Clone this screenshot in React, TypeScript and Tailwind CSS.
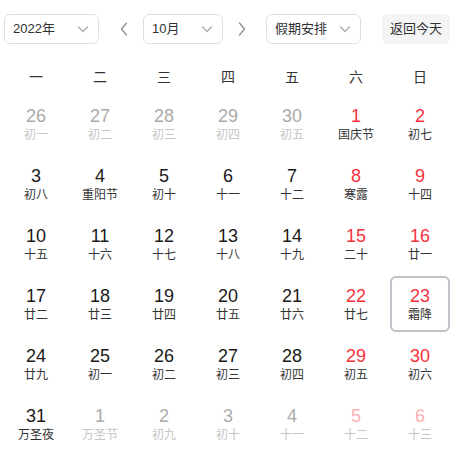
import React from "react";

type Day = {
  num: number;
  lunar: string;
  other?: boolean;
  weekend?: boolean;
  today?: boolean;
};

const font = { fontFamily: '"Liberation Sans", "Noto Sans CJK SC", sans-serif' };

const weekdays = ["一", "二", "三", "四", "五", "六", "日"];

const raw: [number, string, boolean?][] = [
  [26, "初一", true], [27, "初二", true], [28, "初三", true], [29, "初四", true], [30, "初五", true], [1, "国庆节"], [2, "初七"],
  [3, "初八"], [4, "重阳节"], [5, "初十"], [6, "十一"], [7, "十二"], [8, "寒露"], [9, "十四"],
  [10, "十五"], [11, "十六"], [12, "十七"], [13, "十八"], [14, "十九"], [15, "二十"], [16, "廿一"],
  [17, "廿二"], [18, "廿三"], [19, "廿四"], [20, "廿五"], [21, "廿六"], [22, "廿七"], [23, "霜降"],
  [24, "廿九"], [25, "初一"], [26, "初二"], [27, "初三"], [28, "初四"], [29, "初五"], [30, "初六"],
  [31, "万圣夜"], [1, "万圣节", true], [2, "初九", true], [3, "初十", true], [4, "十一", true], [5, "十二", true], [6, "十三", true],
];

const days: Day[] = raw.map(([num, lunar, other], i) => ({
  num,
  lunar,
  other: !!other,
  weekend: i % 7 >= 5,
  today: !other && num === 23,
}));

function SelectArrow() {
  return (
    <svg width="12" height="12" viewBox="0 0 12 12" fill="none" className="shrink-0">
      <path d="M1.5 4 L6 8.5 L10.5 4" stroke="#a8abb2" strokeWidth="1.2" strokeLinecap="round" strokeLinejoin="round" />
    </svg>
  );
}

function Select({ label, width }: { label: string; width: string }) {
  return (
    <div className={`flex h-[30px] ${width} items-center justify-between rounded-[6px] border border-[#dcdfe6] bg-white pl-[8px] pr-[9px] text-[13px] text-[#303133]`}>
      <span>{label}</span>
      <SelectArrow />
    </div>
  );
}

function Chevron({ dir }: { dir: "left" | "right" }) {
  return (
    <svg width="12" height="16" viewBox="0 0 12 16" fill="none" className="shrink-0">
      <path
        d={dir === "left" ? "M8.5 2 L3.5 8 L8.5 14" : "M3.5 2 L8.5 8 L3.5 14"}
        stroke="#909399"
        strokeWidth="1.4"
        strokeLinecap="round"
        strokeLinejoin="round"
      />
    </svg>
  );
}

function DayCell({ d }: { d: Day }) {
  let numColor = "text-[#1a1a1a]";
  let lunarColor = "text-[#333333]";
  if (d.other) {
    numColor = d.weekend ? "text-[#fbb0b3]" : "text-[#ababab]";
    lunarColor = "text-[#c6c6c6]";
  } else if (d.weekend) {
    numColor = "text-[#f5323c]";
  }
  return (
    <div className="p-[2px]">
      <div
        className={`flex h-[56px] flex-col items-center justify-center rounded-[6px] ${
          d.today ? "border-2 border-[#bfc1c8]" : "border-2 border-transparent"
        }`}
      >
        <span className={`text-[18px] leading-[22px] ${numColor}`}>{d.num}</span>
        <span className={`text-[12px] leading-[16px] ${lunarColor}`}>{d.lunar}</span>
      </div>
    </div>
  );
}

export default function App() {
  return (
    <div className="h-[457px] w-[455px] bg-white" style={font}>
      <div className="flex items-center pl-[4px] pt-[14px]">
        <Select label="2022年" width="w-[95px]" />
        <div className="ml-[19px] mr-[13px]">
          <Chevron dir="left" />
        </div>
        <Select label="10月" width="w-[80px]" />
        <div className="ml-[13px] mr-[18px]">
          <Chevron dir="right" />
        </div>
        <Select label="假期安排" width="w-[95px]" />
        <div className="ml-[21px] flex h-[30px] w-[68px] items-center justify-center rounded-[6px] bg-[#f4f4f5] text-[13px] text-[#303133]">
          返回今天
        </div>
      </div>

      <div className="mt-[16px] grid w-[448px] grid-cols-7 pl-[4px]" style={{ width: 452 }}>
        {weekdays.map((w) => (
          <div key={w} className="flex h-[34px] items-center justify-center text-[14px] text-[#333333]">
            {w}
          </div>
        ))}
      </div>

      <div className="grid grid-cols-7 pl-[4px]" style={{ width: 452 }}>
        {days.map((d, i) => (
          <DayCell key={i} d={d} />
        ))}
      </div>
    </div>
  );
}
